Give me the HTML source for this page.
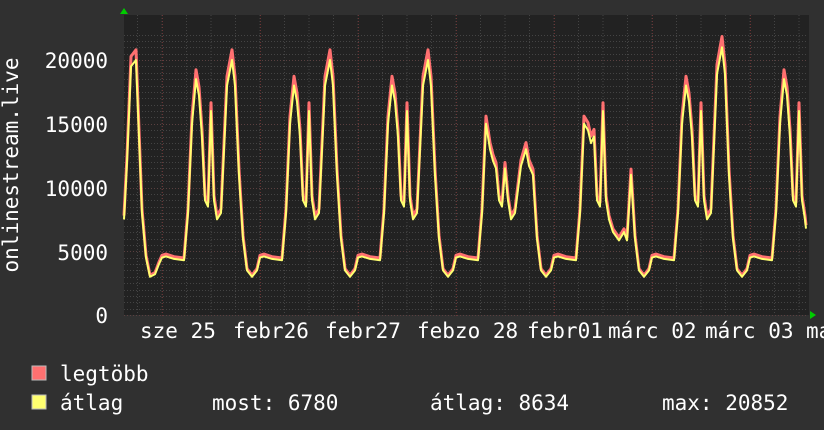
<!DOCTYPE html>
<html><head><meta charset="utf-8"><style>
body{margin:0;width:824px;height:430px;background:#303030;overflow:hidden;font-family:"DejaVu Sans Mono","Liberation Mono",monospace;color:#fff}
.t{position:absolute;font-size:21px;white-space:pre;line-height:1}
</style></head><body>
<svg id="g" width="824" height="430" style="position:absolute;left:0;top:0" xmlns="http://www.w3.org/2000/svg">
<rect x="124" y="15" width="685" height="300" fill="#222"/>
<g id="grid"></g>
<g id="data"></g>
<polygon points="120,14 128,14 124,8" fill="#0c0"/>
<polygon points="810,311 810,319 816,315" fill="#0c0"/>
<text x="18" y="165" fill="#fff" font-size="21" font-family="DejaVu Sans Mono,monospace" text-anchor="middle" transform="rotate(-90 18 165)">onlinestream.live</text>
<g fill="#fff" font-size="21" font-family="DejaVu Sans Mono,monospace" text-anchor="end">
<text x="108" y="68">20000</text><text x="108" y="132">15000</text><text x="108" y="196">10000</text><text x="108" y="260">5000</text><text x="108" y="323">0</text>
</g>
<rect x="32" y="366" width="14" height="14" fill="#ff7070" stroke="#bbb"/>
<rect x="32" y="395" width="14" height="14" fill="#ffff70" stroke="#bbb"/>
</svg>
<div class="t" style="left:140px;top:321px">sze 25</div>
<div class="t" style="left:233px;top:321px">febr26</div>
<div class="t" style="left:325px;top:321px">febr27</div>
<div class="t" style="left:417px;top:321px">febzo 28</div>
<div class="t" style="left:527px;top:321px">febr01</div>
<div class="t" style="left:608px;top:321px">márc 02</div>
<div class="t" style="left:705px;top:321px">márc 03</div>
<div class="t" style="left:806px;top:321px">ma</div>
<div class="t" style="left:60px;top:364px">legtöbb</div>
<div class="t" style="left:60px;top:393px">átlag</div>
<div class="t" style="left:212px;top:393px">most: 6780</div>
<div class="t" style="left:430px;top:393px">átlag: 8634</div>
<div class="t" style="left:662px;top:393px">max: 20852</div>
<script>
var ns="http://www.w3.org/2000/svg",g=document.getElementById('grid'),d=document.getElementById('data');
function ln(x1,y1,x2,y2,c,da){var l=document.createElementNS(ns,'line');l.setAttribute('x1',x1);l.setAttribute('y1',y1);l.setAttribute('x2',x2);l.setAttribute('y2',y2);l.setAttribute('stroke',c);l.setAttribute('stroke-width',1);if(da)l.setAttribute('stroke-dasharray',da);g.appendChild(l);}
for(var v=0;v<=22000;v+=500){var y=Math.round(315-v*0.01275)+.5;ln(124,y,808,y,v%5000==0?'#5a4040':'#444','1,2');}
for(var x=137.5;x<808;x+=24.5){ln(x,15,x,315,'#444','1,2');}
for(var x=162.5;x<808;x+=98){ln(x,15,x,318,'#6a3535','1,2');}
function Y(v){return 315-v*0.01275;}
var days=[[0,0,20000],[162,18500,20000],[260,18000,20000],[358,18000,20000],[456,13000,13000],[554,14500,6500],[652,18000,21000],[750,18500,17500]];
var pts=[[124,7500],[127,12000],[131,19500],[136,20000],[139,14000],[142,8000],[146,4500],[150,3000],[155,3200],[159,4000]];
var tpl=[[0,4500],[4,4600],[12,4400],[22,4300],[26,8000],[30,15000],[34,'A'],[37,'a'],[40,14000],[43,9000],[46,8500],[49,16000],[52,9000],[55,7500],[59,8000],[65,'b'],[70,'B'],[73,'b'],[77,11000],[81,6000],[85,3500],[90,3000],[95,3500]];
for(var i=1;i<days.length;i++){var D=days[i];tpl.forEach(function(p){var v=p[1];if(v=='A')v=D[1];else if(v=='a')v=D[1]*.93;else if(v=='B')v=D[2];else if(v=='b')v=D[2]*.9;
 if(i==4&&(p[0]>=40&&p[0]<=59))v=Math.min(v,11500);
 if(i==5&&p[0]>=59&&p[0]<=73)v=Math.min(v,6500);
 var x=D[0]+p[0];if(x<=806)pts.push([x,v]);});}
pts.push([806,6780]);
function path(f,c,w){var s=pts.map(function(p,i){return(i?'L':'M')+p[0]+' '+Y(p[1]*f).toFixed(1)}).join('');var e=document.createElementNS(ns,'path');e.setAttribute('d',s);e.setAttribute('fill','none');e.setAttribute('stroke',c);e.setAttribute('stroke-width',w);e.setAttribute('stroke-linejoin','round');d.appendChild(e);}
path(1.04,'#ff7070',3);path(1,'#ffff70',2);
</script>
</body></html>
